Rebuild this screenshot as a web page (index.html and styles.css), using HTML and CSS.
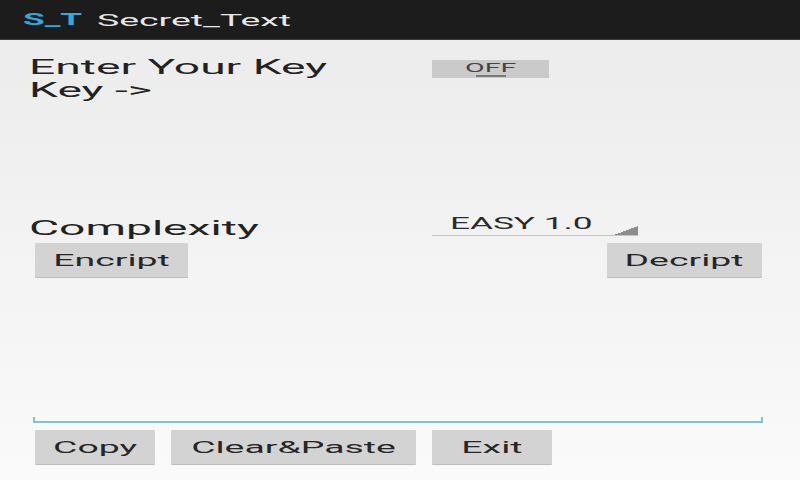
FILE: index.html
```html
<!DOCTYPE html>
<html lang="en">
<head>
  <meta charset="UTF-8">
  <meta name="viewport" content="width=device-width, initial-scale=1.0">
  <title>Secret_Text</title>
  <link rel="stylesheet" href="styles.css">
</head>
<body>
  <header class="bar">
    <span class="logo"><span class="t">S_T</span></span>
    <span class="title"><span class="t">Secret_Text</span></span>
  </header>

  <main class="screen">
    <div class="row key-row">
      <div class="label"><span class="t">Enter Your Key<br>Key -&gt;</span></div>
      <div class="toggle"><span class="t">OFF</span><i class="thumb"></i></div>
    </div>

    <div class="row complexity-row">
      <div class="label"><span class="t">Complexity</span></div>
      <div class="spinner"><span class="t">EASY 1.0</span></div>
    </div>

    <div class="row action-row">
      <button class="btn encrypt"><span class="t">Encript</span></button>
      <button class="btn decrypt"><span class="t">Decript</span></button>
    </div>

    <div class="output"></div>

    <div class="row bottom-row">
      <button class="btn copy"><span class="t">Copy</span></button>
      <button class="btn paste"><span class="t">Clear&amp;Paste</span></button>
      <button class="btn exit"><span class="t">Exit</span></button>
    </div>
  </main>
</body>
</html>
```

FILE: styles.css
```css
* { box-sizing: border-box; }
body { margin: 0; width: 800px; height: 480px; overflow: hidden; font-family: Roboto, "Noto Sans", sans-serif; color: #222; background: linear-gradient(#ebebeb, #fafafa); }

/* the screenshot is stretched sideways, so every text run is widened */
.t { display: inline-block; white-space: nowrap; transform: scaleX(2.2); transform-origin: left center; }
.btn .t, .toggle .t { transform-origin: center; }

.bar { height: 40px; display: flex; align-items: center; padding-left: 23px; background: #1c1c1c; border-bottom: 1px solid #3a3a3a; }
.logo { width: 74px; font-size: 16px; font-weight: bold; color: #35a8db; }
.title { font-size: 17px; color: #e8e8e8; }

.row { display: flex; }
.label { width: 403px; font-size: 21px; line-height: 23px; color: #222; }

.key-row { margin-top: 16px; padding-left: 29px; }
.toggle { margin-top: 4px; width: 117px; height: 18px; padding-top: 1px; display: flex; flex-direction: column; align-items: center; background: #cacaca; font-size: 13px; line-height: 13px; color: #444; }
.thumb { display: block; width: 30px; height: 2px; margin-top: 1px; background: #7a7a7a; }

.complexity-row { margin-top: 112px; padding-left: 29px; }
.complexity-row .label { padding-top: 3px; }
.spinner { width: 206px; height: 22px; padding-left: 18px; font-size: 16px; line-height: 20px; color: #2a2a2a; border-bottom: 1px solid #c4c4c4;
  background: linear-gradient(to bottom right, transparent 50%, #8c8c8c 50%) no-repeat right bottom / 24px 9px; }

.btn { height: 34px; padding: 0; border: none; border-radius: 1px; background: #d3d3d3; box-shadow: 0 1px 0 #bdbdbd; font-family: inherit; font-size: 17px; color: #262626; }

.action-row { margin-top: 3px; padding: 0 38px 0 35px; justify-content: space-between; }
.encrypt { width: 153px; }
.decrypt { width: 155px; }

.output { height: 146px; margin: 0 37px 0 33px; border-bottom: 2px solid #7ec3d0;
  background: linear-gradient(#7ec3d0, #7ec3d0) no-repeat left bottom / 2px 4px, linear-gradient(#7ec3d0, #7ec3d0) no-repeat right bottom / 2px 4px; }

.bottom-row { margin-top: 7px; padding-left: 35px; gap: 16px; }
.copy { width: 120px; }
.paste { width: 245px; }
.exit { width: 120px; }
```
